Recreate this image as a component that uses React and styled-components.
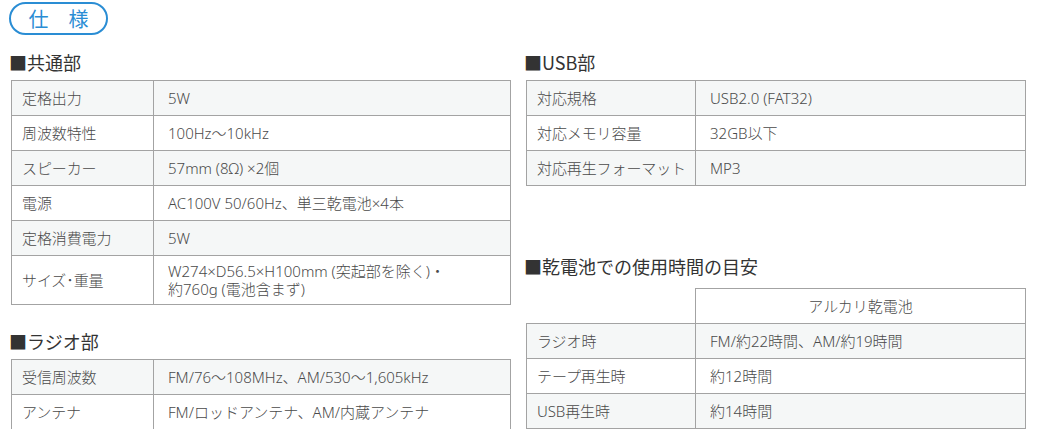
import React from "react";
import styled, { createGlobalStyle } from "styled-components";

const GlobalStyle = createGlobalStyle`
  html, body { margin: 0; padding: 0; background: #fff; }
  body {
    font-family: "Noto Sans", "Noto Sans CJK JP", sans-serif;
    color: #4a4a4a;
  }
`;

const Page = styled.div`
  width: 1045px;
  box-sizing: border-box;
  padding: 2px 0 0 9px;
`;

const Badge = styled.div`
  display: flex;
  align-items: center;
  justify-content: center;
  width: 99px;
  height: 33px;
  box-sizing: border-box;
  border: 2px solid #2a8dd4;
  border-radius: 17px;
  color: #2a8dd4;
  font-family: "Noto Sans CJK JP", sans-serif;
  font-size: 20px;
  line-height: 1;
`;

const Columns = styled.div`
  display: grid;
  grid-template-columns: 502px 502px;
  column-gap: 13px;
  margin-top: 15px;
  align-items: start;
`;

const Column = styled.div`
  display: flex;
  flex-direction: column;
`;

const Heading = styled.h2`
  margin: ${(p) => p.$top || 0}px 0 ${(p) => p.$bottom ?? 6}px;
  font-family: "Noto Sans CJK JP", sans-serif;
  font-size: 18px;
  line-height: 24px;
  font-weight: 400;
  color: #333;
`;

const Table = styled.table`
  border-collapse: collapse;
  table-layout: fixed;
  width: 500px;
  margin-left: 2px;
  font-size: 15px;
  font-weight: 300;
  line-height: 18px;

  tr { height: 35px; }
  tbody tr:nth-child(odd) { background: #f5f7f7; }
`;

const Col = styled.col`
  width: ${(p) => p.$w}px;
`;

const Label = styled.td`
  border: 1px solid #a3a3a3;
  padding: 6px 2px 6px 10px;
  vertical-align: middle;
  text-align: left;
  white-space: nowrap;
  letter-spacing: -0.1px;
`;

const Value = styled.td`
  border: 1px solid #a3a3a3;
  padding: 6px 14px;
  vertical-align: middle;
  text-align: left;
`;

const Corner = styled.th`
  border: none;
  background: transparent;
`;

const HeadCell = styled.th`
  border: 1px solid #a3a3a3;
  padding: 6px 14px;
  font-weight: 300;
  text-align: center;
  vertical-align: middle;
  background: #fff;
`;

const common = [
  ["定格出力", "5W"],
  ["周波数特性", "100Hz〜10kHz"],
  ["スピーカー", "57mm (8Ω) ×2個"],
  ["電源", "AC100V 50/60Hz、単三乾電池×4本"],
  ["定格消費電力", "5W"],
  ["サイズ･重量", ["W274×D56.5×H100mm (突起部を除く)・", "約760g (電池含まず)"]],
];

const radio = [
  ["受信周波数", "FM/76〜108MHz、AM/530〜1,605kHz"],
  ["アンテナ", "FM/ロッドアンテナ、AM/内蔵アンテナ"],
];

const usb = [
  ["対応規格", "USB2.0 (FAT32)"],
  ["対応メモリ容量", "32GB以下"],
  ["対応再生フォーマット", "MP3"],
];

const battery = [
  ["ラジオ時", "FM/約22時間、AM/約19時間"],
  ["テープ再生時", "約12時間"],
  ["USB再生時", "約14時間"],
];

function Rows({ rows }) {
  return rows.map(([k, v]) => (
    <tr key={k}>
      <Label>{k}</Label>
      <Value>
        {Array.isArray(v)
          ? v.map((line, i) => (
              <React.Fragment key={i}>
                {i > 0 && <br />}
                {line}
              </React.Fragment>
            ))
          : v}
      </Value>
    </tr>
  ));
}

function SpecTable({ rows, first }) {
  return (
    <Table>
      <colgroup>
        <Col $w={first} />
        <Col />
      </colgroup>
      <tbody>
        <Rows rows={rows} />
      </tbody>
    </Table>
  );
}

export default function App() {
  return (
    <Page>
      <GlobalStyle />
      <Badge>仕　様</Badge>
      <Columns>
        <Column>
          <Heading>■共通部</Heading>
          <SpecTable rows={common} first={142} />
          <Heading $top={24}>■ラジオ部</Heading>
          <SpecTable rows={radio} first={142} />
        </Column>
        <Column>
          <Heading>■USB部</Heading>
          <SpecTable rows={usb} first={169} />
          <Heading $top={68} $bottom={10}>■乾電池での使用時間の目安</Heading>
          <Table>
            <colgroup>
              <Col $w={169} />
              <Col />
            </colgroup>
            <thead>
              <tr>
                <Corner />
                <HeadCell>アルカリ乾電池</HeadCell>
              </tr>
            </thead>
            <tbody>
              <Rows rows={battery} />
            </tbody>
          </Table>
        </Column>
      </Columns>
    </Page>
  );
}
